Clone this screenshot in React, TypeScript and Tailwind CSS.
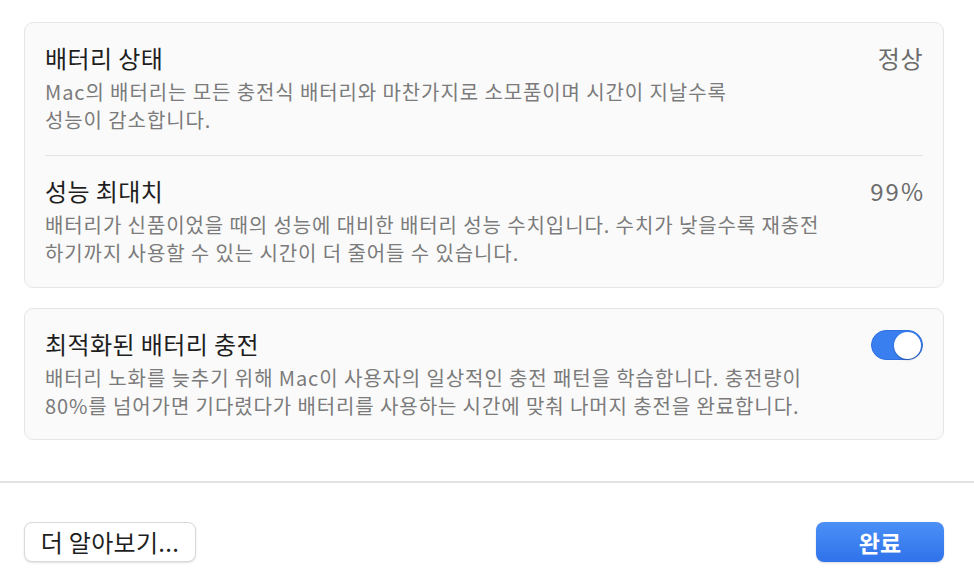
import React from "react";

const font = { fontFamily: '"Noto Sans CJK KR", "Noto Sans", sans-serif' };

function Row({ title, value, desc, last, toggle, valueClass, pb }: { title: string; value?: string; desc: React.ReactNode; last?: boolean; toggle?: boolean; valueClass?: string; pb?: string }) {
  return (
    <div className={`flex items-start justify-between pt-[21px] ${last ? pb ?? "pb-[20px]" : "pb-[21px] border-b border-[#e4e4e4]"}`}>
      <div className="flex flex-col gap-[6px]">
        <div className="text-[24px] leading-[28px] tracking-[0.4px] text-[#1e1e1e]">{title}</div>
        <div className="text-[20px] leading-[28px] tracking-[0.9px] text-[#7b7b7b]">{desc}</div>
      </div>
      {value && <div className={`text-[24px] leading-[28px] text-[#6c6c6c] ${valueClass ?? ""}`}>{value}</div>}
      {toggle && (
        <div className="w-[52px] h-[30px] rounded-full bg-[#3a7ff0] border border-[#2f6fe0] flex items-center justify-end pr-[1px]">
          <div className="w-[27px] h-[27px] rounded-full bg-white shadow-[0_1px_2px_rgba(0,0,0,0.25)]" />
        </div>
      )}
    </div>
  );
}

export default function App() {
  return (
    <div style={font} className="w-[974px] h-[584px] bg-white flex flex-col overflow-hidden">
      <div className="flex flex-col gap-[20px] pl-[24px] pr-[30px] pt-[22px]">
        <div className="rounded-[9px] border border-[#e6e6e6] bg-[#fafafa] px-[20px]">
          <Row
            title="배터리 상태"
            value="정상"
            valueClass="tracking-[0.5px]"
            desc={<>Mac의 배터리는 모든 충전식 배터리와 마찬가지로 소모품이며 시간이 지날수록<br />성능이 감소합니다.</>}
          />
          <Row
            title="성능 최대치"
            value="99%"
            valueClass="tracking-[2px] -mr-[2px]"
            last
            desc={<>배터리가 신품이었을 때의 성능에 대비한 배터리 성능 수치입니다. 수치가 낮을수록 재충전<br />하기까지 사용할 수 있는 시간이 더 줄어들 수 있습니다.</>}
          />
        </div>
        <div className="rounded-[9px] border border-[#e6e6e6] bg-[#fafafa] px-[20px]">
          <Row
            title="최적화된 배터리 충전"
            toggle
            last
            pb="pb-[19px]"
            desc={<>배터리 노화를 늦추기 위해 Mac이 사용자의 일상적인 충전 패턴을 학습합니다. 충전량이<br />80%를 넘어가면 기다렸다가 배터리를 사용하는 시간에 맞춰 나머지 충전을 완료합니다.</>}
          />
        </div>
      </div>
      <div className="mt-[41px] h-[2px] bg-[#e3e3e3]" />
      <div className="flex justify-between pl-[24px] pr-[30px] pt-[39px]">
        <button className="h-[40px] w-[172px] rounded-[8px] bg-white border border-[#d9d9d9] shadow-[0_1px_2px_rgba(0,0,0,0.12)] text-[24px] tracking-[0.3px] text-[#1e1e1e] flex items-center justify-center">
          더 알아보기...
        </button>
        <button className="h-[40px] w-[128px] rounded-[8px] bg-gradient-to-b from-[#4b90f6] to-[#2f72ea] text-white text-[23px] font-semibold flex items-center justify-center shadow-[0_1px_2px_rgba(0,0,0,0.15)]">
          완료
        </button>
      </div>
    </div>
  );
}
